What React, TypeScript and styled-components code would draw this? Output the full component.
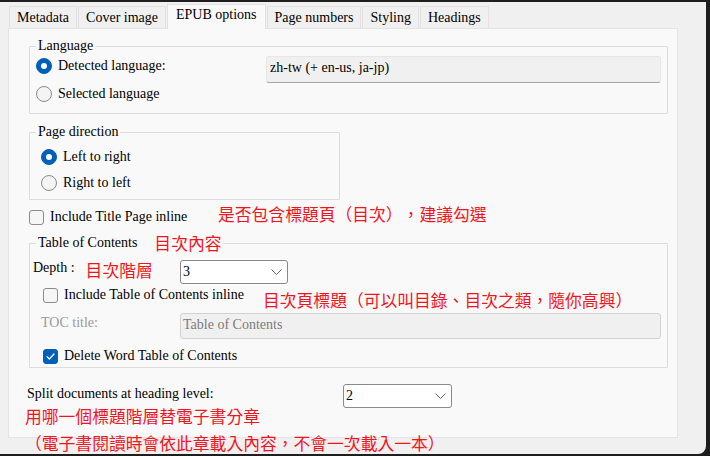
import React from 'react'
import styled, { createGlobalStyle } from 'styled-components'

const GlobalStyle = createGlobalStyle`
  html, body {
    margin: 0;
    padding: 0;
    background: #1e1e1e;
  }
  body {
    font-family: "Liberation Serif", "Times New Roman", serif;
    font-size: 14px;
    color: #000;
  }
`

const Window = styled.div`
  width: 706px;
  height: 452px;
  margin-top: 2px;
  background: #f0f0f0;
  border-bottom-right-radius: 8px;
  overflow: hidden;
  display: flex;
  flex-direction: column;
`

const TabStrip = styled.div`
  display: flex;
  align-items: flex-end;
  height: 26px;
  padding-left: 9px;
`

const Tab = styled.div<{ $active?: boolean }>`
  height: ${p => (p.$active ? 25 : 22)}px;
  box-sizing: border-box;
  padding: 0 ${p => (p.$active ? 8 : 7)}px;
  margin-right: 1px;
  margin-bottom: ${p => (p.$active ? -1 : 0)}px;
  border: 1px solid #e2e2e2;
  border-bottom: none;
  background: ${p => (p.$active ? '#f9f9f9' : '#f0f0f0')};
  line-height: ${p => (p.$active ? 20 : 21)}px;
  white-space: nowrap;
  position: relative;
  z-index: ${p => (p.$active ? 1 : 0)};
`

const Panel = styled.div`
  margin-left: 8px;
  width: 670px;
  height: 410px;
  box-sizing: border-box;
  border: 1px solid #e4e4e4;
  background: #f9f9f9;
  padding: 7px 9px 0 20px;
  display: flex;
  flex-direction: column;
`

const Group = styled.fieldset<{ $width?: number; $gap?: number }>`
  margin: ${p => p.$gap ?? 0}px 0 0 0;
  padding: 0;
  min-width: 0;
  box-sizing: border-box;
  width: ${p => (p.$width ? `${p.$width}px` : 'auto')};
  border: 1px solid #dcdcdc;
  border-radius: 1px;
  font: inherit;
`

const Legend = styled.legend<{ $gap?: number }>`
  margin-left: 6px;
  padding: 0 2px;
  line-height: 20px;
  display: flex;
  align-items: center;
  gap: ${p => p.$gap ?? 0}px;
`

const GroupBody = styled.div<{ $pad: string }>`
  padding: ${p => p.$pad};
  display: flex;
  flex-direction: column;
`

const FieldRow = styled.div<{ $cols: string; $gap?: number }>`
  display: grid;
  grid-template-columns: ${p => p.$cols};
  align-items: start;
  margin-top: ${p => p.$gap ?? 0}px;
`

const Inline = styled.div<{ $gap?: number }>`
  display: flex;
  align-items: flex-start;
  gap: ${p => p.$gap ?? 0}px;
`

const Option = styled.label<{ $drop?: number; $indent?: number }>`
  display: flex;
  align-items: center;
  gap: 6px;
  height: 16px;
  line-height: 16px;
  white-space: nowrap;
  margin-top: ${p => p.$drop ?? 0}px;
  margin-left: ${p => p.$indent ?? 0}px;
`

const RadioDot = styled.span<{ $on?: boolean }>`
  width: 16px;
  height: 16px;
  flex: none;
  box-sizing: border-box;
  border-radius: 50%;
  border: 1px solid ${p => (p.$on ? '#005fb8' : '#8b8b8b')};
  background: ${p => (p.$on ? '#005fb8' : '#f4f4f4')};
  display: flex;
  align-items: center;
  justify-content: center;
  &::after {
    content: '';
    display: ${p => (p.$on ? 'block' : 'none')};
    width: 6px;
    height: 6px;
    border-radius: 50%;
    background: #fff;
  }
`

const CheckBox = styled.span<{ $on?: boolean }>`
  width: 15px;
  height: 15px;
  flex: none;
  box-sizing: border-box;
  border-radius: 3px;
  border: 1px solid ${p => (p.$on ? '#005fb8' : '#8b8b8b')};
  background: ${p => (p.$on ? '#005fb8' : '#f6f6f6')};
  display: flex;
  align-items: center;
  justify-content: center;
`

const Text = styled.span<{ $muted?: boolean; $drop?: number; $indent?: number }>`
  line-height: 16px;
  white-space: nowrap;
  color: ${p => (p.$muted ? '#9a9a9a' : '#000')};
  margin-top: ${p => p.$drop ?? 0}px;
  margin-left: ${p => p.$indent ?? 0}px;
`

const Note = styled.span<{ $drop?: number }>`
  font-family: "Noto Sans CJK TC", "Noto Sans CJK SC", sans-serif;
  font-size: 16.8px;
  line-height: 20px;
  color: #f3141e;
  white-space: nowrap;
  text-spacing-trim: space-all;
  margin-top: ${p => p.$drop ?? 0}px;
`

const Field = styled.div<{ $disabled?: boolean }>`
  height: ${p => (p.$disabled ? 26 : 27)}px;
  box-sizing: border-box;
  border: 1px solid ${p => (p.$disabled ? '#d2d2d2' : '#e6e6e6')};
  border-bottom-color: ${p => (p.$disabled ? '#d2d2d2' : '#a6a6a6')};
  border-radius: 3px;
  background: #f0f0f0;
  padding-left: ${p => (p.$disabled ? 2 : 3)}px;
  line-height: 22px;
  color: ${p => (p.$disabled ? '#7c7c7c' : '#000')};
  white-space: nowrap;
`

const Combo = styled.div<{ $width: number }>`
  width: ${p => p.$width}px;
  height: 24px;
  box-sizing: border-box;
  border: 1px solid #8a8a8a;
  border-radius: 3px;
  background: #fff;
  display: flex;
  align-items: center;
  justify-content: space-between;
  padding: 0 5px 0 2px;
`

const Notes = styled.div`
  display: flex;
  flex-direction: column;
  gap: 7px;
  margin-top: -2px;
  margin-left: -4px;
`

const Radio = ({ on, label }: { on?: boolean; label: string }) => (
  <Option>
    <RadioDot $on={on} />
    {label}
  </Option>
)

const Check = ({ on, label, drop, indent }: { on?: boolean; label: string; drop?: number; indent?: number }) => (
  <Option $drop={drop} $indent={indent}>
    <CheckBox $on={on}>
      {on && (
        <svg width="9" height="7" viewBox="0 0 9 7">
          <path d="M1 3.6 L3.4 6 L8 1" fill="none" stroke="#fff" strokeWidth="1.3" strokeLinecap="round" strokeLinejoin="round" />
        </svg>
      )}
    </CheckBox>
    {label}
  </Option>
)

const Select = ({ value, width }: { value: string; width: number }) => (
  <Combo $width={width}>
    <span>{value}</span>
    <svg width="11" height="6" viewBox="0 0 11 6">
      <path d="M0.5 0.5 L5.5 5.5 L10.5 0.5" fill="none" stroke="#6a6a6a" strokeWidth="1" />
    </svg>
  </Combo>
)

const tabs = ['Metadata', 'Cover image', 'EPUB options', 'Page numbers', 'Styling', 'Headings']

export default function App() {
  return (
    <>
      <GlobalStyle />
      <Window>
        <TabStrip>
          {tabs.map(t => (
            <Tab key={t} $active={t === 'EPUB options'}>{t}</Tab>
          ))}
        </TabStrip>
        <Panel>
          <Group>
            <Legend>Language</Legend>
            <GroupBody $pad="0 6px 11px 6px">
              <FieldRow $cols="230px 1fr">
                <Option $drop={2}>
                  <RadioDot $on />
                  Detected language:
                </Option>
                <Field>zh-tw (+ en-us, ja-jp)</Field>
              </FieldRow>
              <FieldRow $cols="1fr" $gap={3}>
                <Radio label="Selected language" />
              </FieldRow>
            </GroupBody>
          </Group>

          <Group $width={311} $gap={8}>
            <Legend>Page direction</Legend>
            <GroupBody $pad="7px 6px 8px 11px">
              <Radio on label="Left to right" />
              <FieldRow $cols="1fr" $gap={10}>
                <Radio label="Right to left" />
              </FieldRow>
            </GroupBody>
          </Group>

          <FieldRow $cols="189px 1fr" $gap={4}>
            <Check label="Include Title Page inline" drop={5} />
            <Note>是否包含標題頁（目次），建議勾選</Note>
          </FieldRow>

          <Group $gap={8}>
            <Legend $gap={17}>
              Table of Contents
              <Note>目次內容</Note>
            </Legend>
            <GroupBody $pad="7px 6px 3px 3px">
              <FieldRow $cols="147px 1fr">
                <Inline $gap={11}>
                  <Text>Depth :</Text>
                  <Note>目次階層</Note>
                </Inline>
                <Select value="3" width={108} />
              </FieldRow>
              <FieldRow $cols="230px 1fr">
                <Check label="Include Table of Contents inline" drop={3} indent={10} />
                <Note $drop={6}>目次頁標題（可以叫目錄、目次之類，隨你高興）</Note>
              </FieldRow>
              <FieldRow $cols="147px 1fr" $gap={3}>
                <Text $muted $drop={2} $indent={8}>TOC title:</Text>
                <Field $disabled>Table of Contents</Field>
              </FieldRow>
              <FieldRow $cols="1fr" $gap={9}>
                <Check on label="Delete Word Table of Contents" indent={10} />
              </FieldRow>
            </GroupBody>
          </Group>

          <FieldRow $cols="314px 1fr" $gap={16}>
            <Text $drop={2} $indent={-2}>Split documents at heading level:</Text>
            <Select value="2" width={109} />
          </FieldRow>

          <Notes>
            <Note>用哪一個標題階層替電子書分章</Note>
            <Note>（電子書閱讀時會依此章載入內容，不會一次載入一本）</Note>
          </Notes>
        </Panel>
      </Window>
    </>
  )
}
